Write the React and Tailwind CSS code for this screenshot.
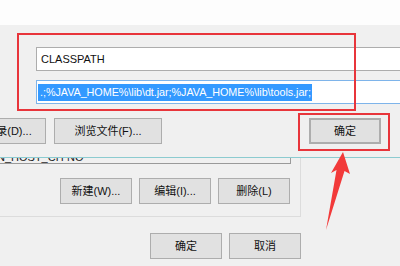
import React from 'react';

const font = { fontFamily: '"Liberation Sans", "Noto Sans CJK SC", sans-serif' };

const Btn = ({ children, className = '' }) => (
    <div className={`h-[26px] flex items-center justify-center bg-[#e1e1e1] border border-[#adadad] text-[11px] text-[#111] ${className}`}>
        {children}
    </div>
);

const App = () => {
    return (
        <div className="relative w-[400px] h-[266px] overflow-hidden bg-[#f0f0f0]" style={font}>
            {/* top strip */}
            <div className="h-[25px] bg-[#fdfdfd]" />

            {/* edit variable dialog */}
            <div className="h-[133px] border-b border-[#8ccbd0] flex flex-col">
                <div className="mt-[22px] ml-[36px] w-[380px] h-[24px] bg-white border border-[#adadad] flex items-center pl-[4px] text-[11px] text-[#111]">
                    CLASSPATH
                </div>
                <div className="mt-[9px] ml-[36px] w-[380px] h-[24px] bg-white border border-[#7eb4ea] flex items-center pl-[1px]">
                    <span className="bg-[#3399ff] text-white text-[10.8px] tracking-[-0.05px] leading-[17px] pl-[2px] pr-[1px]">
                        .;%JAVA_HOME%\lib\dt.jar;%JAVA_HOME%\lib\tools.jar;
                    </span>
                </div>
                <div className="mt-[14px] flex items-center">
                    <Btn className="w-[75px] ml-[-29px]">目录(D)...</Btn>
                    <Btn className="w-[108px] ml-[8px]">浏览文件(F)...</Btn>
                    <Btn className="w-[72px] ml-auto mr-[19px] border-2 border-[#0078d7]">确定</Btn>
                </div>
            </div>

            {/* environment variables dialog behind */}
            <div className="w-[301px] h-[59px] border-r border-b border-[#dcdcdc] flex flex-col">
                <div className="w-[291px] h-[6px] border-r border-b border-[#9a9a9a] overflow-hidden relative">
                    <div className="flex text-[11px] text-[#222] leading-[12px] mt-[-7px] ml-[-3px]">
                        <span className="w-[70px]">N_HOST_CH</span>
                        <span>NO</span>
                    </div>
                </div>
                <div className="mt-[14px] flex gap-[7px] ml-[60px]">
                    <Btn className="w-[72px] h-[25px]">新建(W)...</Btn>
                    <Btn className="w-[72px] h-[25px]">编辑(I)...</Btn>
                    <Btn className="w-[72px] h-[25px]">删除(L)</Btn>
                </div>
            </div>
            <div className="mt-[16px] ml-[150px] flex gap-[7px]">
                <Btn className="w-[72px] h-[25px]">确定</Btn>
                <Btn className="w-[72px] h-[25px]">取消</Btn>
            </div>

            {/* annotations */}
            <div className="absolute left-[17px] top-[33px] w-[339px] h-[78px] border-2 border-[#e8353b]" />
            <div className="absolute left-[298px] top-[113px] w-[92px] h-[38px] border-2 border-[#e8353b]" />
            <svg className="absolute left-0 top-0" width="400" height="266" viewBox="0 0 400 266">
                <polygon points="343,152 350,174 344.5,171 326,230 336.5,170 331,173" fill="#f23a3a" />
            </svg>
        </div>
    );
};

export default App;
